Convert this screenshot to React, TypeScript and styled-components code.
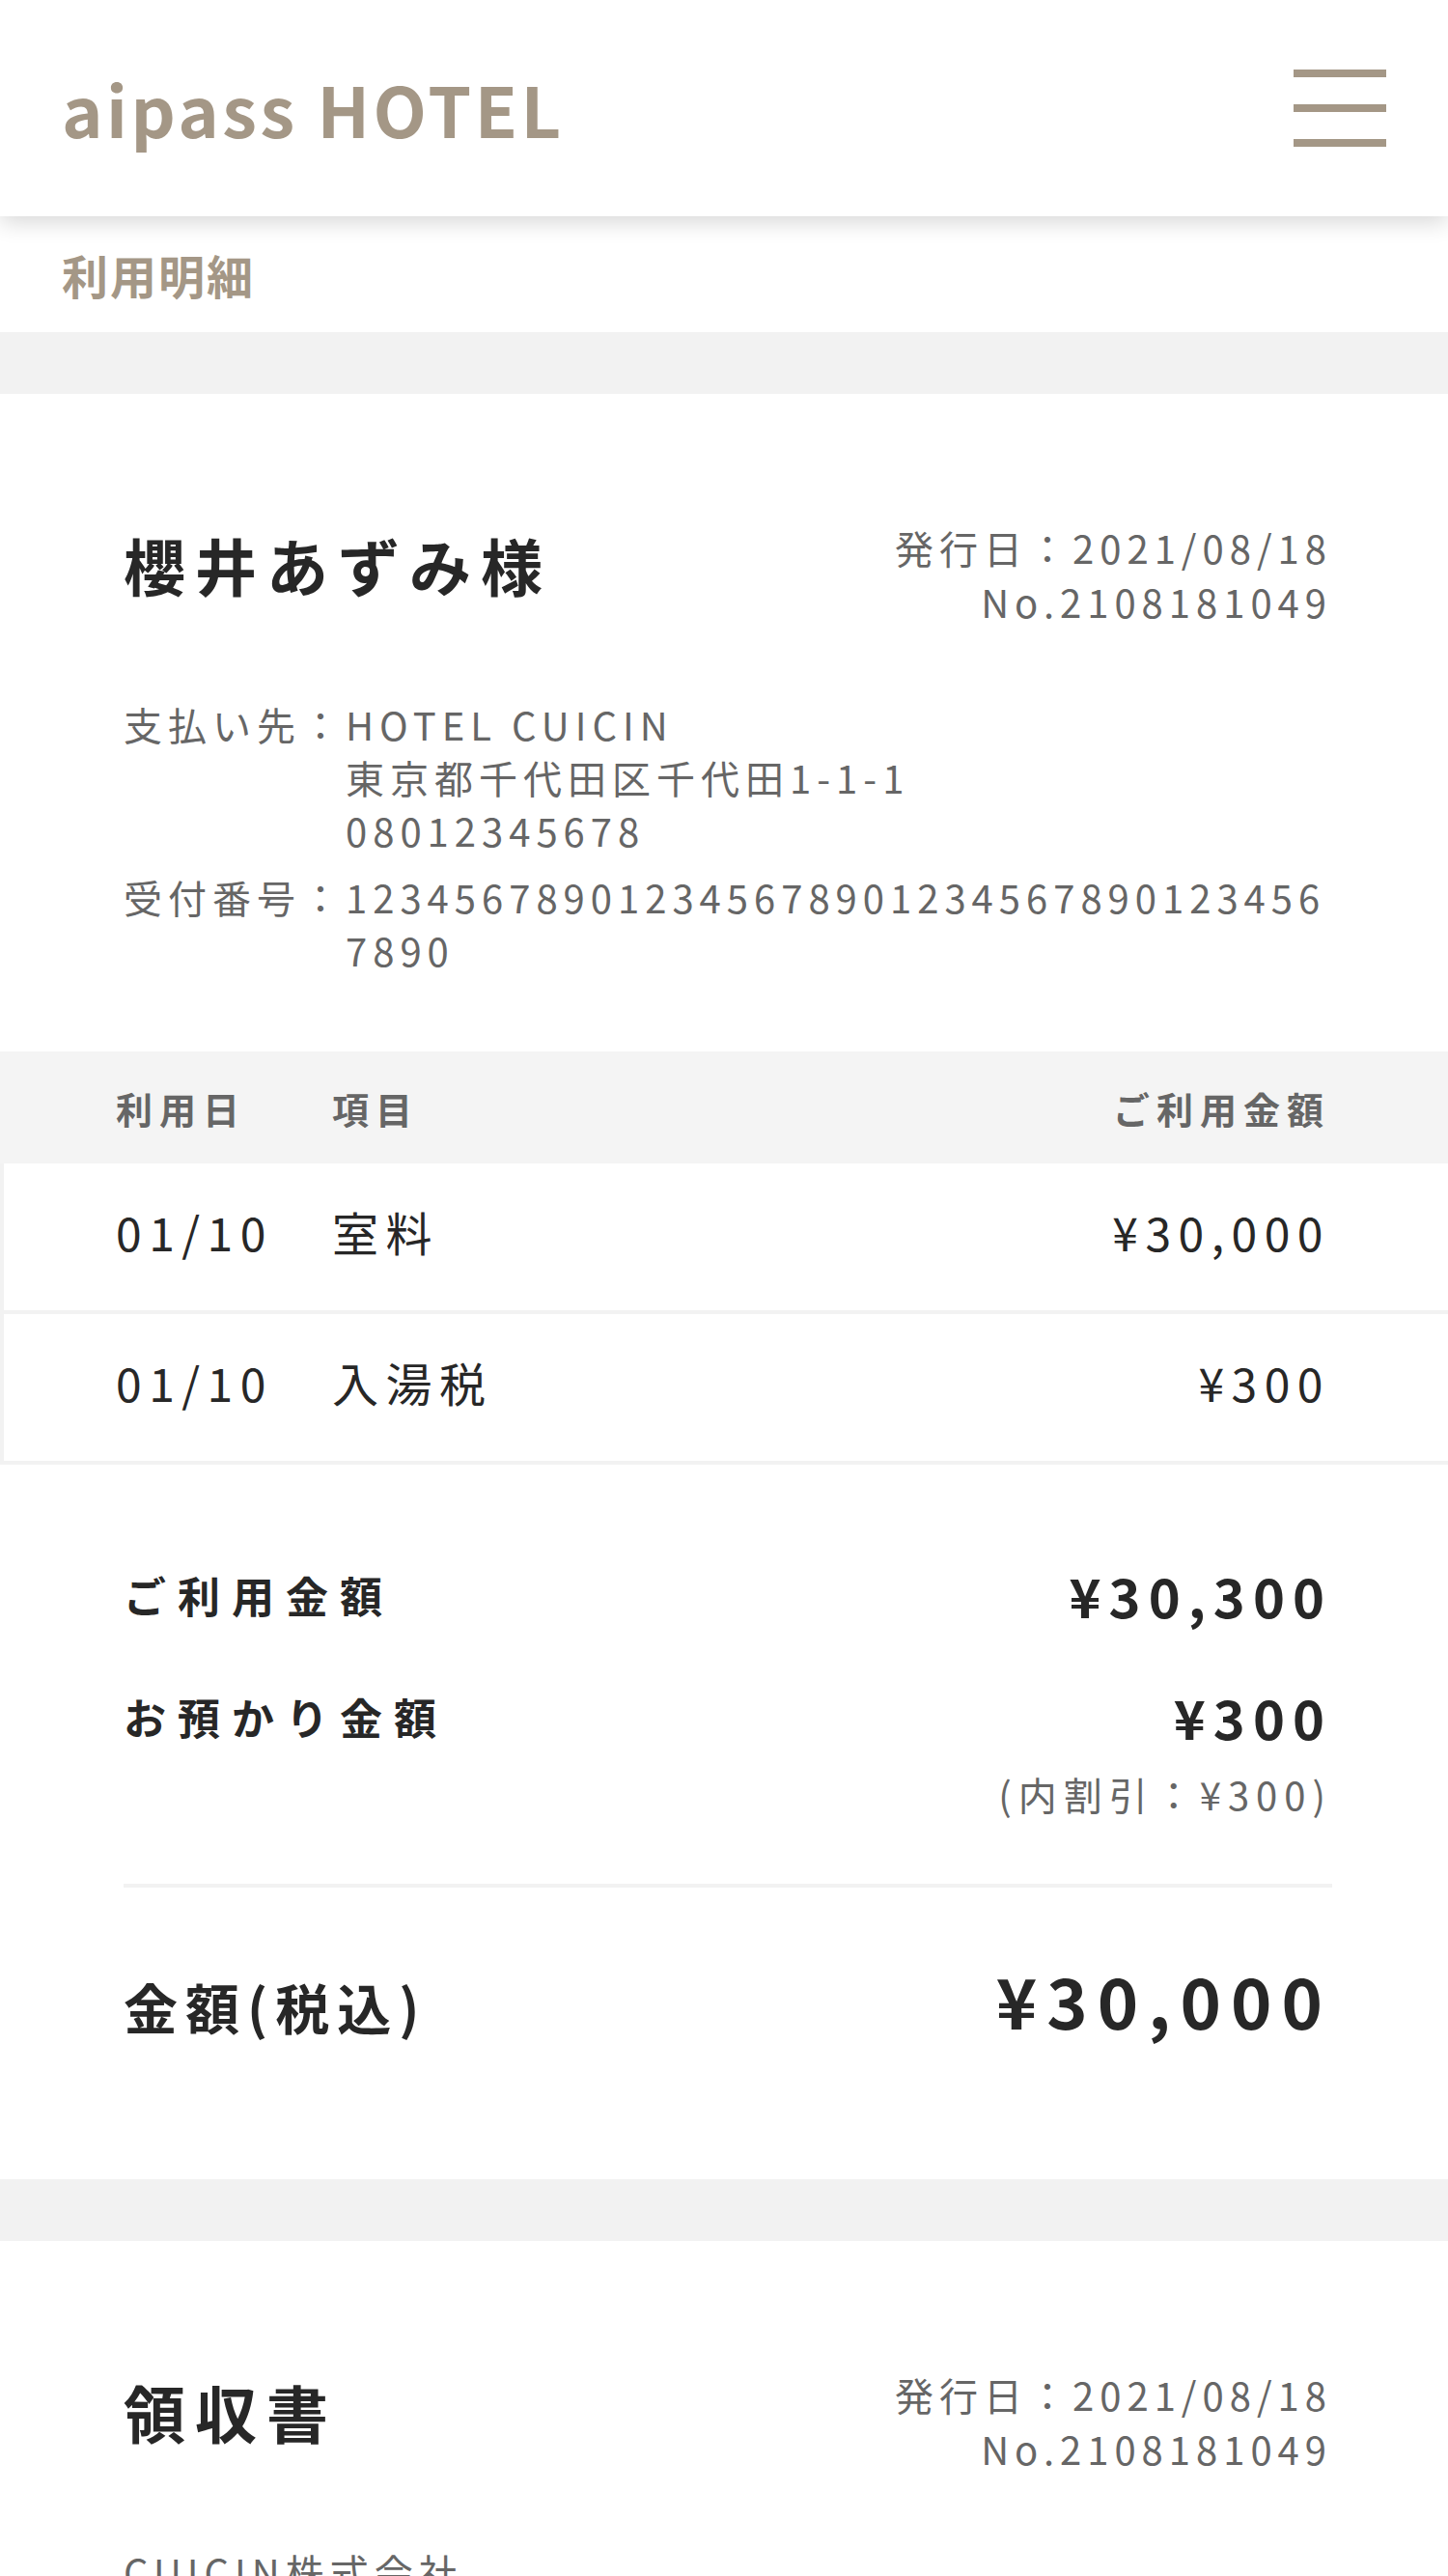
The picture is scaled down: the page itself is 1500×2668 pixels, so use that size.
import React from "react";
import styled, { createGlobalStyle } from "styled-components";

const GlobalStyle = createGlobalStyle`
  html, body { margin: 0; padding: 0; background: #ffffff; }
  body {
    font-family: "Noto Sans CJK JP", "Noto Sans", sans-serif;
    color: #272727;
    -webkit-font-smoothing: antialiased;
  }
  * { box-sizing: border-box; }
`;

const ACCENT = "#a49786";
const BAND = "#f2f2f2";

const Page = styled.div`
  width: 1500px;
  display: flex;
  flex-direction: column;
`;

const Header = styled.header`
  height: 224px;
  padding: 0 64px 0 64px;
  display: flex;
  align-items: center;
  justify-content: space-between;
  background: #fff;
  box-shadow: 0 6px 22px rgba(0, 0, 0, 0.16);
  position: relative;
  z-index: 2;
`;

const Logo = styled.div`
  font-size: 72px;
  font-weight: 700;
  letter-spacing: 3.5px;
  color: ${ACCENT};
  line-height: 1;
`;

const Burger = styled.button`
  width: 96px;
  height: 80px;
  padding: 0;
  border: none;
  background: transparent;
  display: flex;
  flex-direction: column;
  justify-content: space-between;
`;

const BurgerBar = styled.span`
  display: block;
  width: 96px;
  height: 8px;
  background: ${ACCENT};
`;

const SubHeader = styled.div`
  height: 120px;
  padding-left: 64px;
  display: flex;
  align-items: center;
  font-size: 48px;
  font-weight: 700;
  letter-spacing: 2px;
  color: ${ACCENT};
  background: #fff;
`;

const Band = styled.div`
  height: 64px;
  background: ${BAND};
`;

const Section = styled.section<{ $bottom?: number }>`
  padding: 128px 120px ${(p) => p.$bottom ?? 77}px 128px;
  background: #fff;
`;

const TitleRow = styled.div`
  display: flex;
  justify-content: space-between;
  align-items: flex-start;
`;

const Title = styled.h1`
  margin: 0;
  font-size: 64px;
  line-height: 96px;
  font-weight: 700;
  letter-spacing: 10px;
  color: #272727;
`;

const IssueInfo = styled.div`
  padding-top: 3px;
  text-align: right;
  font-size: 40px;
  line-height: 56px;
  letter-spacing: 6px;
  color: #666666;
`;

const InfoList = styled.div`
  margin-top: 72px;
  display: flex;
  flex-direction: column;
  gap: 14px;
`;

const InfoRow = styled.div`
  display: grid;
  grid-template-columns: auto 1fr;
  font-size: 40px;
  line-height: 55px;
  letter-spacing: 6px;
  color: #666666;
`;

const InfoLabel = styled.div`
  white-space: nowrap;
`;

const InfoValue = styled.div`
  word-break: break-all;
`;

const Table = styled.div`
  display: flex;
  flex-direction: column;
`;

const TableHead = styled.div`
  height: 116px;
  padding: 0 122px 0 120px;
  display: flex;
  align-items: center;
  background: #f4f4f4;
  font-size: 38px;
  font-weight: 700;
  letter-spacing: 7px;
  color: #666666;
`;

const TableRow = styled.div`
  height: 156px;
  padding: 0 122px 12px 116px;
  display: flex;
  align-items: center;
  border-left: 4px solid ${BAND};
  border-bottom: 4px solid ${BAND};
  font-size: 48px;
  letter-spacing: 7.5px;
  color: #272727;
`;

const DateCell = styled.div`
  width: 224px;
  flex: none;
`;

const ItemCell = styled.div`
  flex: 1;
`;

const AmountCell = styled.div`
  text-align: right;
`;

const Summary = styled.div`
  padding: 93px 120px 132px 128px;
  display: flex;
  flex-direction: column;
`;

const SummaryRow = styled.div<{ $gap?: number }>`
  display: flex;
  justify-content: space-between;
  align-items: center;
  margin-top: ${(p) => p.$gap ?? 0}px;
`;

const SummaryLabel = styled.div`
  font-size: 44px;
  line-height: 66px;
  font-weight: 700;
  letter-spacing: 12px;
  color: #272727;
`;

const SummaryAmount = styled.div`
  font-size: 56px;
  line-height: 84px;
  font-weight: 700;
  letter-spacing: 8px;
  color: #272727;
`;

const Note = styled.div`
  margin-top: 10px;
  text-align: right;
  font-size: 40px;
  line-height: 56px;
  letter-spacing: 7px;
  color: #666666;
`;

const Divider = styled.hr`
  margin: 65px 0 0 0;
  border: none;
  height: 4px;
  background: ${BAND};
`;

const TotalRow = styled.div`
  margin-top: 62px;
  display: flex;
  justify-content: space-between;
  align-items: baseline;
`;

const TotalLabel = styled.div`
  font-size: 56px;
  line-height: 84px;
  font-weight: 700;
  letter-spacing: 8px;
  color: #272727;
`;

const TotalAmount = styled.div`
  font-size: 72px;
  line-height: 108px;
  font-weight: 700;
  letter-spacing: 10px;
  color: #272727;
`;

const ReceiptLines = styled.div`
  margin-top: 72px;
  font-size: 40px;
  line-height: 55px;
  letter-spacing: 6px;
  color: #666666;
`;

const items = [
  { date: "01/10", name: "室料", amount: "¥30,000" },
  { date: "01/10", name: "入湯税", amount: "¥300" },
];

export default function App() {
  return (
    <Page>
      <GlobalStyle />
      <Header>
        <Logo>aipass HOTEL</Logo>
        <Burger aria-label="menu">
          <BurgerBar />
          <BurgerBar />
          <BurgerBar />
        </Burger>
      </Header>
      <SubHeader>利用明細</SubHeader>
      <Band />

      <Section>
        <TitleRow>
          <Title>櫻井あずみ様</Title>
          <IssueInfo>
            <div>発行日：2021/08/18</div>
            <div>No.2108181049</div>
          </IssueInfo>
        </TitleRow>
        <InfoList>
          <InfoRow>
            <InfoLabel>支払い先：</InfoLabel>
            <InfoValue>
              <div>HOTEL CUICIN</div>
              <div>東京都千代田区千代田1-1-1</div>
              <div>08012345678</div>
            </InfoValue>
          </InfoRow>
          <InfoRow>
            <InfoLabel>受付番号：</InfoLabel>
            <InfoValue>1234567890123456789012345678901234567890</InfoValue>
          </InfoRow>
        </InfoList>
      </Section>

      <Table>
        <TableHead>
          <DateCell>利用日</DateCell>
          <ItemCell>項目</ItemCell>
          <AmountCell>ご利用金額</AmountCell>
        </TableHead>
        {items.map((it, i) => (
          <TableRow key={i}>
            <DateCell>{it.date}</DateCell>
            <ItemCell>{it.name}</ItemCell>
            <AmountCell>{it.amount}</AmountCell>
          </TableRow>
        ))}
      </Table>

      <Summary>
        <SummaryRow>
          <SummaryLabel>ご利用金額</SummaryLabel>
          <SummaryAmount>¥30,300</SummaryAmount>
        </SummaryRow>
        <SummaryRow $gap={42}>
          <SummaryLabel>お預かり金額</SummaryLabel>
          <SummaryAmount>¥300</SummaryAmount>
        </SummaryRow>
        <Note>(内割引：¥300)</Note>
        <Divider />
        <TotalRow>
          <TotalLabel>金額(税込)</TotalLabel>
          <TotalAmount>¥30,000</TotalAmount>
        </TotalRow>
      </Summary>

      <Band />

      <Section $bottom={128}>
        <TitleRow>
          <Title>領収書</Title>
          <IssueInfo>
            <div>発行日：2021/08/18</div>
            <div>No.2108181049</div>
          </IssueInfo>
        </TitleRow>
        <ReceiptLines>
          <div>CUICIN株式会社</div>
        </ReceiptLines>
      </Section>
    </Page>
  );
}
